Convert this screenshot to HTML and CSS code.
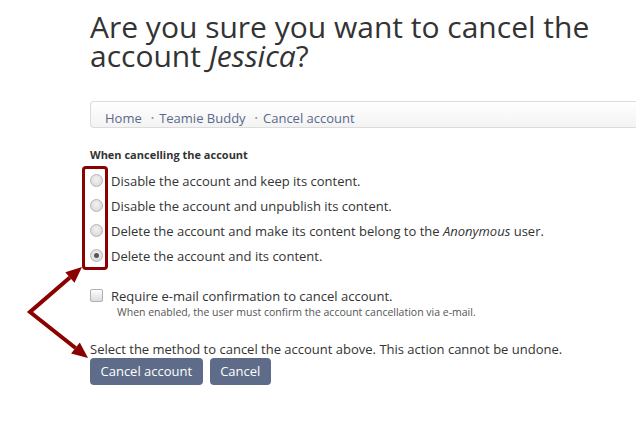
FILE: index.html
```html
<!DOCTYPE html>
<html>
<head>
<meta charset="utf-8">
<link rel="stylesheet" href="styles.css">
</head>
<body>
<div class="page">
  <h1 class="title">Are you sure you want to cancel the account <em>Jessica</em>?</h1>
  <div class="crumbs">
    <a class="crumb">Home</a><span class="sep">•</span><a class="crumb">Teamie Buddy</a><span class="sep">•</span><a class="crumb">Cancel account</a>
  </div>
  <form class="form">
    <div class="legend">When cancelling the account</div>
    <div class="options">
      <label class="opt"><span class="radio"></span><span>Disable the account and keep its content.</span></label>
      <label class="opt"><span class="radio"></span><span>Disable the account and unpublish its content.</span></label>
      <label class="opt"><span class="radio"></span><span>Delete the account and make its content belong to the <em>Anonymous</em> user.</span></label>
      <label class="opt"><span class="radio checked"></span><span>Delete the account and its content.</span></label>
    </div>
    <div class="check-row">
      <label class="opt"><span class="checkbox"></span><span>Require e-mail confirmation to cancel account.</span></label>
      <div class="desc">When enabled, the user must confirm the account cancellation via e-mail.</div>
    </div>
    <p class="note">Select the method to cancel the account above. This action cannot be undone.</p>
    <div class="actions">
      <button type="button" class="btn">Cancel account</button>
      <button type="button" class="btn">Cancel</button>
    </div>
  </form>
  <div class="hl-box"></div>
  <svg class="arrows" width="100" height="110" viewBox="0 0 100 110">
    <polyline points="49.9,15.5 10,50 55.5,86" stroke="#8b0000" stroke-width="4" fill="none" stroke-linejoin="miter"/>
    <polygon points="62,5 54.5,20.8 45.3,10.2" fill="#8b0000"/>
    <polygon points="68,96 51.1,91.5 59.8,80.5" fill="#8b0000"/>
  </svg>
</div>
</body>
</html>
```
FILE: styles.css
```css
html, body { margin: 0; padding: 0; background: #fff; overflow: hidden; }
body { font-family: "Open Sans", "DejaVu Sans", sans-serif; color: #333; width: 636px; height: 440px; }
.page { position: relative; padding-left: 90px; padding-top: 12px; height: 428px; }
.title { margin: 0; font-weight: 400; font-size: 30px; line-height: 29px; color: #333; width: 540px; }
.title em { font-style: italic; }
.crumbs {
  margin-top: 31px; height: 18px; width: 600px;
  border: 1px solid #dcdcdc; border-right: none; border-radius: 4px 0 0 4px;
  background: linear-gradient(#fff, #f3f3f3);
  display: flex; padding: 7px 0 0 14px;
  font-size: 13px; line-height: 18px;
}
.crumb { color: #59698a; }
.sep { color: #999; font-size: 9px; margin: 0 5px 0 9px; line-height: 18px; }
.form { margin-top: 20px; }
.legend { font-size: 11px; font-weight: 700; color: #333; line-height: 14px; }
.options { margin-top: 6px; display: flex; flex-direction: column; }
.opt { display: flex; align-items: center; font-size: 13px; height: 25px; color: #333; }
.opt em { font-style: italic; }
.radio {
  width: 11px; height: 11px; border-radius: 50%; border: 1px solid #b5b5b5;
  background: radial-gradient(circle at 50% 40%, #f2f2f2, #d4d4d4);
  margin-right: 8px; flex: none; position: relative;
}
.radio.checked::after {
  content: ""; position: absolute; left: 3px; top: 3px; width: 5px; height: 5px; border-radius: 50%; background: #555;
}
.check-row { margin-top: 15px; }
.checkbox {
  width: 11px; height: 11px; border: 1px solid #b0b0b0; border-radius: 2px;
  background: linear-gradient(#fdfdfd, #dcdcdc); margin-right: 8px; flex: none;
}
.desc { font-size: 10.5px; color: #555; margin-left: 27px; margin-top: -3px; line-height: 14px; }
.note { margin: 22px 0 0; font-size: 13px; line-height: 16px; color: #333; }
.actions { display: flex; gap: 7px; margin-top: 1px; }
.btn {
  font-family: inherit; font-size: 13px; color: #fff; background: #5e6c89;
  border: none; border-radius: 4px; height: 27px; padding: 0 10.5px; line-height: 27px;
}
.hl-box {
  position: absolute; left: 82px; top: 166px; width: 20px; height: 98px;
  border: 3px solid #8b0000; border-radius: 4px;
}
.arrows { position: absolute; left: 20px; top: 262px; overflow: visible; }
```
